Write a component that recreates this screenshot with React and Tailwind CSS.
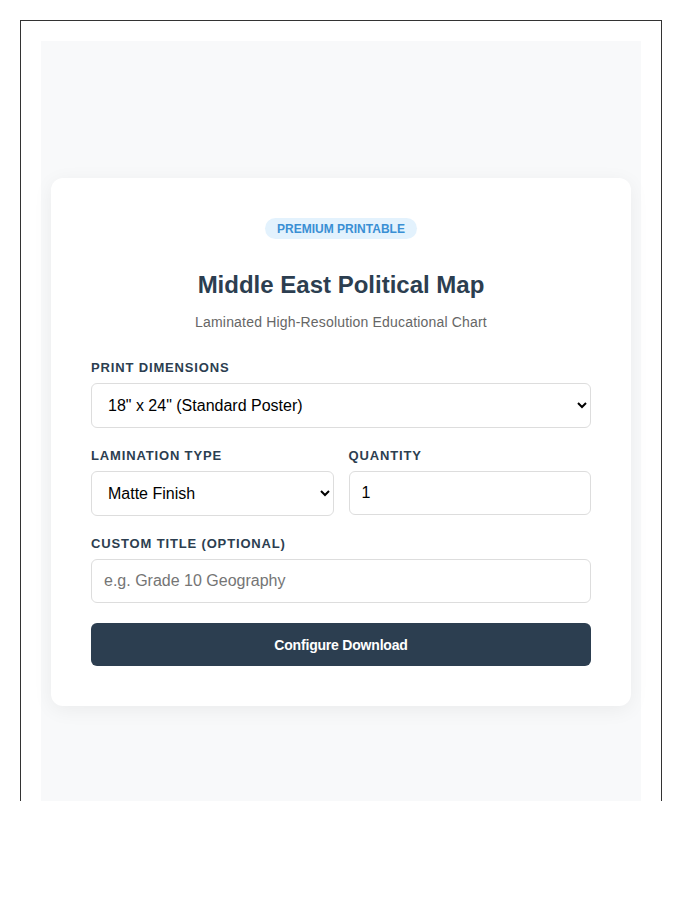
export default function App() {
  const labelCls =
    "block mb-2 text-[13px] leading-[15px] font-bold uppercase tracking-[0.85px] text-[#2c3e50]";
  const fieldCls =
    "w-full h-[45px] px-3 text-base text-black bg-white border border-[#dddddd] rounded-md outline-none";

  return (
    <div className="font-['Liberation_Sans',Arial,sans-serif]">
      <div className="ml-5 mt-5 w-[642px] h-[781px] border-x border-t border-[#333333] px-5 pt-5 overflow-hidden">
        <div className="h-[800px] bg-[#f8f9fa] px-[10px] pt-[137px]">
          <div className="bg-white rounded-xl shadow-[0_4px_20px_rgba(0,0,0,0.06)] p-10">
            <div className="flex justify-center">
              <span className="px-3 h-[21px] flex items-center rounded-full bg-[#e3f2fd] text-[#3a8fd4] text-xs font-bold">
                PREMIUM PRINTABLE
              </span>
            </div>
            <h1 className="mt-[32px] text-center text-2xl leading-7 font-bold text-[#2c3e50]">
              Middle East Political Map
            </h1>
            <p className="mt-[15px] text-center text-sm leading-4 tracking-[0.18px] text-[#666666]">
              Laminated High-Resolution Educational Chart
            </p>

            <div className="mt-[30px]">
              <label className={labelCls}>Print Dimensions</label>
              <select className={fieldCls} defaultValue="18x24">
                <option value="18x24">18" x 24" (Standard Poster)</option>
                <option value="24x36">24" x 36" (Large Poster)</option>
              </select>
            </div>

            <div className="mt-5 flex gap-[15px]">
              <div className="flex-1">
                <label className={labelCls}>Lamination Type</label>
                <select className={fieldCls} defaultValue="matte">
                  <option value="matte">Matte Finish</option>
                  <option value="gloss">Gloss Finish</option>
                </select>
              </div>
              <div className="flex-1">
                <label className={labelCls}>Quantity</label>
                <input
                  type="number"
                  defaultValue="1"
                  className="w-full h-[44px] px-3 text-base text-black bg-white border border-[#dddddd] rounded-md outline-none"
                />
              </div>
            </div>

            <div className="mt-5">
              <label className={labelCls}>Custom Title (Optional)</label>
              <input
                type="text"
                placeholder="e.g. Grade 10 Geography"
                className="w-full h-[44px] px-3 text-base text-black bg-white border border-[#dddddd] rounded-md outline-none placeholder:text-[#757575]"
              />
            </div>

            <button className="mt-5 w-full h-[43px] rounded-md bg-[#2c3e50] text-white text-sm font-bold tracking-[-0.2px]">
              Configure Download
            </button>
          </div>
        </div>
      </div>
    </div>
  );
}
